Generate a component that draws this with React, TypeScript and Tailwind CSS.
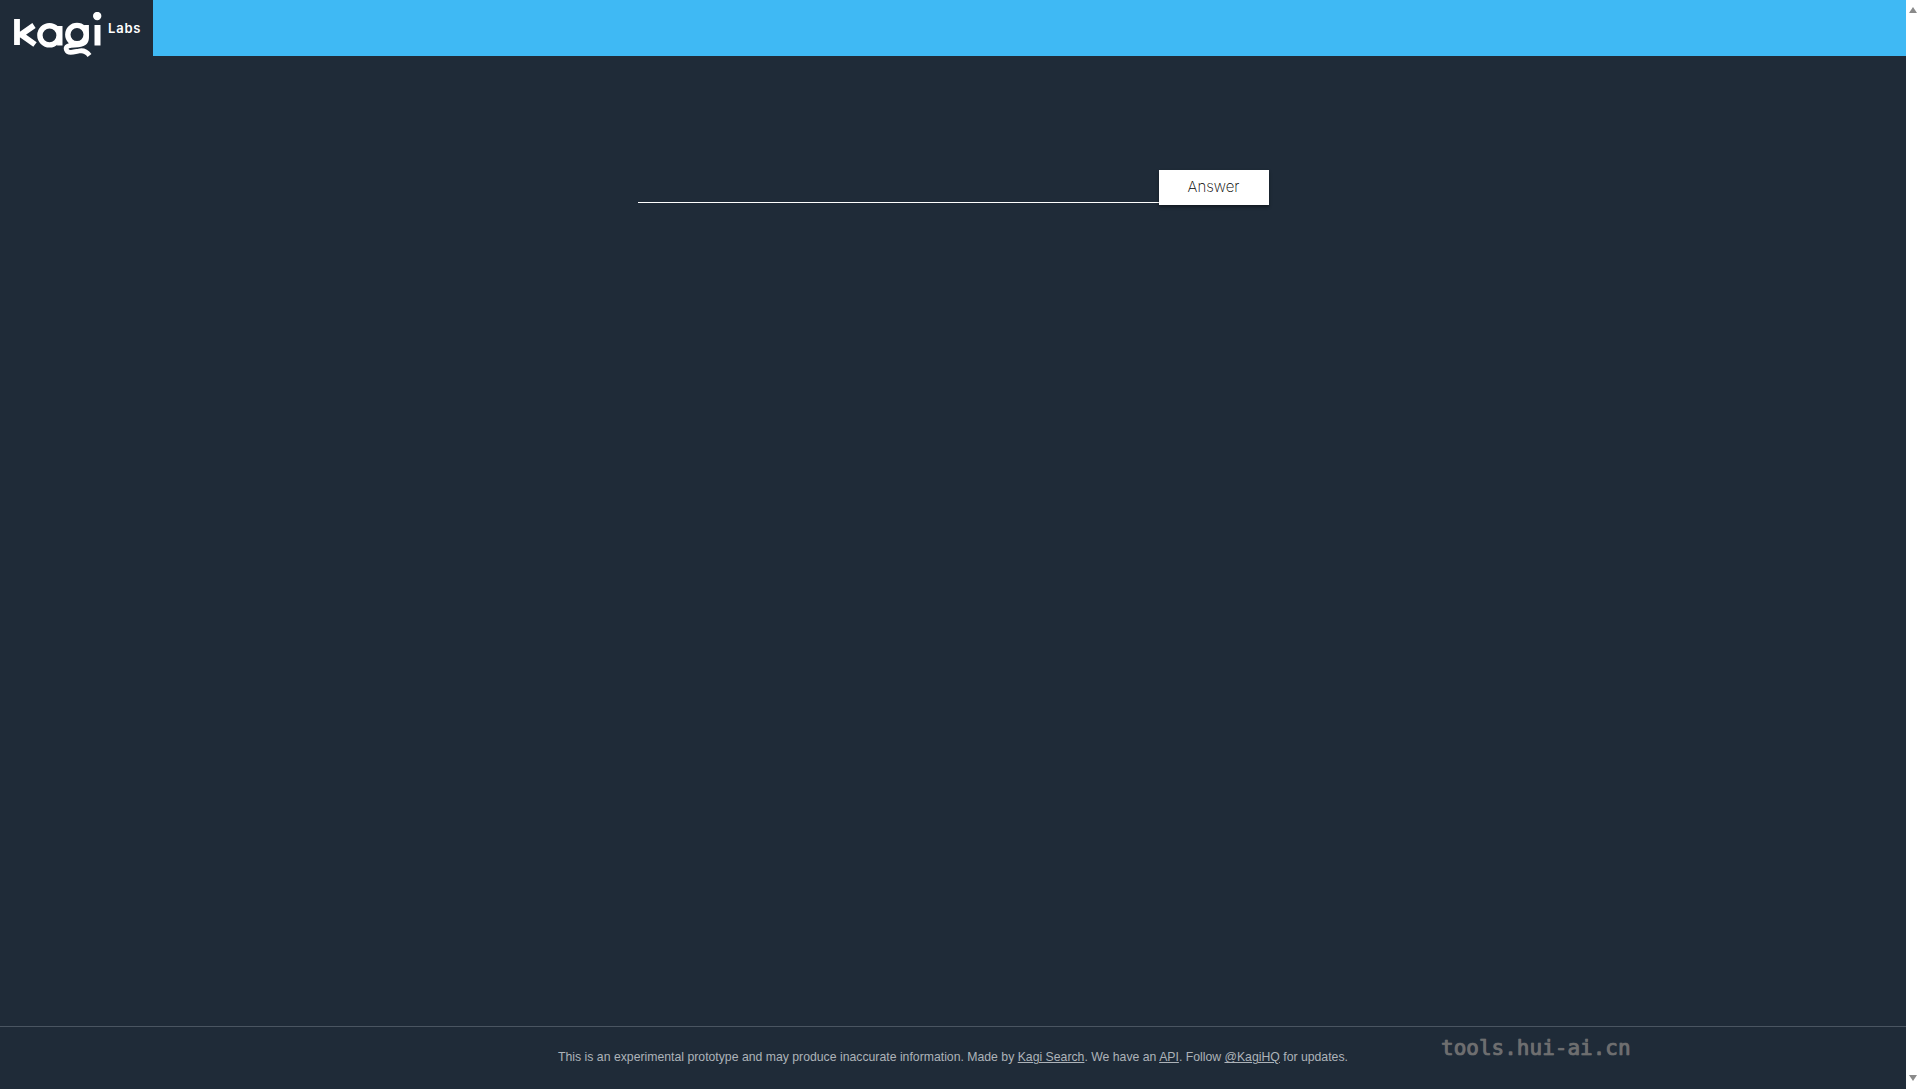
export default function App() {
  return (
    <div className="flex h-[1089px] w-full overflow-hidden bg-[#1f2b38] font-['Liberation_Sans',sans-serif]">
      <div className="relative flex min-w-0 flex-1 flex-col">
        <header className="flex h-14 bg-[#3fb9f4]">
          <div className="flex w-[153px] items-start bg-[#1f2b38] pl-[14px] pt-3">
            <svg width="90" height="46" viewBox="14 12 90 46" fill="none" stroke="#ffffff" strokeWidth="5.4" aria-label="kagi">
              <path d="M17 19V45M34 25.5L21 34.5L35 44.5" strokeWidth="5.8" />
              <circle cx="49.5" cy="35.3" r="9.6" />
              <path d="M59.8 26V45.5" />
              <circle cx="77" cy="34.6" r="9.2" />
              <path d="M86.5 25V38C86.5 44 81 45 75 45C69 45 65 46.5 66.5 50C68 54 74 52 79 51C84 50 87 52 89.5 55.5" strokeWidth="4.8" />
              <path d="M97.5 25V45.5" strokeWidth="6" />
              <circle cx="97.2" cy="16" r="4.2" fill="#ffffff" stroke="none" />
            </svg>
            <span className="ml-1 mt-2 font-['Inter',sans-serif] text-[13px] leading-4 font-semibold tracking-[0.8px] text-white">Labs</span>
          </div>
          <div className="flex-1" />
        </header>
        <main className="flex flex-1 justify-center pt-[114px]">
          <div className="flex h-[35px] w-[631px] items-stretch">
            <div className="mb-[2px] flex-1 border-b border-white" />
            <button className="w-[110px] pb-[1px] bg-white font-['Inter',sans-serif] text-[15px] font-extralight text-[#000000] shadow-[0_2px_3px_rgba(0,0,0,0.4)]">Answer</button>
          </div>
        </main>
        <footer className="flex h-[63px] items-center justify-center border-t border-[#4a5561] pb-[1px] text-[12.25px] text-[#adb3b9]">
          <p>
            This is an experimental prototype and may produce inaccurate information. Made by <a className="underline" href="#">Kagi Search</a>. We have an <a className="underline" href="#">API</a>. Follow <a className="underline" href="#">@KagiHQ</a> for updates.
          </p>
        </footer>
        <div className="absolute left-[1441px] top-[1034px] font-['DejaVu_Sans_Mono',monospace] text-[21px] leading-7 text-[#6e6e6e] [-webkit-text-stroke:0.6px_#6e6e6e] [text-shadow:0_0_1px_rgba(255,255,255,0.4)]">tools.hui-ai.cn</div>
      </div>
      <div className="flex w-[14px] flex-col items-center justify-between bg-white pb-[8px] pt-[7px]">
        <svg width="8" height="6" viewBox="0 0 8 6"><path d="M4 0L8 6H0Z" fill="#8a8a8a" /></svg>
        <svg width="8" height="6" viewBox="0 0 8 6"><path d="M0 0H8L4 6Z" fill="#8a8a8a" /></svg>
      </div>
    </div>
  );
}
